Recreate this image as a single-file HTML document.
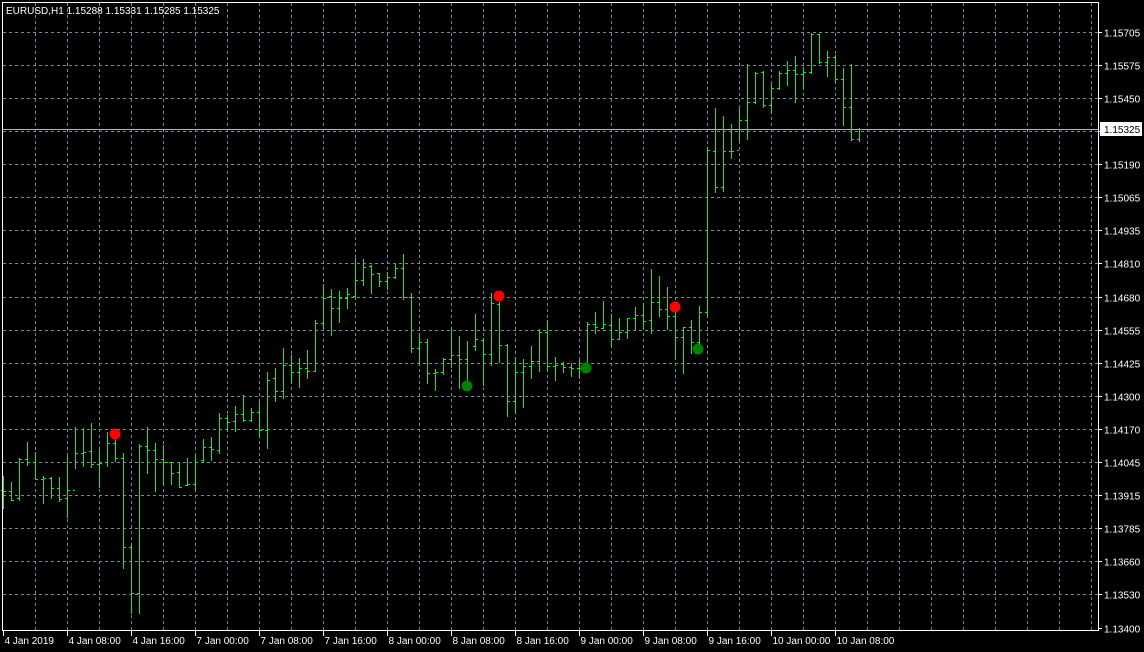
<!DOCTYPE html>
<html><head><meta charset="utf-8"><style>
html,body{margin:0;padding:0;background:#000;width:1144px;height:652px;overflow:hidden}
svg{display:block}
text{font-family:"Liberation Sans",sans-serif;font-size:10px;fill:#fff}
</style></head><body>
<svg id="c" width="1144" height="652" xmlns="http://www.w3.org/2000/svg">
<rect width="1144" height="652" fill="#000"/>
<g id="grid" stroke="#778899" stroke-width="1" stroke-dasharray="3,3"></g>
<line x1="2" y1="129.5" x2="1098" y2="129.5" stroke="#a8b4c0" stroke-width="1"/>
<g id="bars" stroke="#1ee61e" stroke-width="1" shape-rendering="crispEdges"></g>
<circle cx="115" cy="434" r="5.5" fill="#ff0000"/>
<circle cx="499" cy="296" r="5.5" fill="#ff0000"/>
<circle cx="675" cy="307" r="5.5" fill="#ff0000"/>
<circle cx="467" cy="386" r="5.5" fill="#008000"/>
<circle cx="586" cy="368" r="5.5" fill="#008000"/>
<circle cx="698" cy="349" r="5.5" fill="#008000"/>
<rect x="2.5" y="2.5" width="1096" height="628" fill="none" stroke="#fff" stroke-width="1"/>
<g id="axis"></g>
<text x="6" y="14">EURUSD,H1  1.15288 1.15331 1.15285 1.15325</text>
<rect x="1100" y="122" width="42" height="14" fill="#fff"/>
<text x="1104" y="133" style="fill:#000">1.15325</text>
</svg>
<script>
var NS="http://www.w3.org/2000/svg";
function el(p,t,a,txt){var e=document.createElementNS(NS,t);for(var k in a)e.setAttribute(k,a[k]);if(txt)e.textContent=txt;p.appendChild(e);return e;}
var g=document.getElementById('grid'),b=document.getElementById('bars'),ax=document.getElementById('axis');
var prices=["1.15705","1.15575","1.15450","1.15325","1.15190","1.15065","1.14935","1.14810","1.14680","1.14555","1.14425","1.14300","1.14170","1.14045","1.13915","1.13785","1.13660","1.13530","1.13400"];
for(var i=0;i<prices.length;i++){var y=Math.round(31.7+i*33.1)+0.5;
 if(i<18)el(g,'line',{x1:3,y1:y,x2:1098,y2:y});
 el(ax,'line',{x1:1098,y1:y,x2:1102,y2:y,stroke:'#fff'});
 if(i!=3)el(ax,'text',{x:1104,y:y+4},prices[i]);}
for(var j=1;j<=34;j++){var x=3+32*j+0.5;el(g,'line',{x1:x,y1:3,x2:x,y2:630});}
var times=["4 Jan 2019","4 Jan 08:00","4 Jan 16:00","7 Jan 00:00","7 Jan 08:00","7 Jan 16:00","8 Jan 00:00","8 Jan 08:00","8 Jan 16:00","9 Jan 00:00","9 Jan 08:00","9 Jan 16:00","10 Jan 00:00","10 Jan 08:00"];
for(var t=0;t<times.length;t++){var x=3+64*t+0.5;el(ax,'line',{x1:x,y1:631,x2:x,y2:636,stroke:'#fff'});el(ax,'text',{x:x+1,y:644},times[t]);}
var d=[[476,508,490,491],[482,500,491,500],[458,500,498,459],[442,465,459,462],[452,479,462,479],[476,503,479,478],[477,498,478,488],[477,501,488,499],[456,517,498,490],[427,468,490,453],[428,466,453,452],[423,467,451,464],[450,487,464,463],[432,466,462,443],[438,461,443,458],[453,568,458,547],[543,613,547,593],[444,613,593,446],[427,473,446,450],[443,491,450,459],[445,485,459,462],[462,484,462,473],[463,487,472,487],[458,485,485,484],[455,490,484,462],[439,462,460,447],[437,460,447,449],[413,453,450,418],[415,430,418,422],[406,431,421,414],[395,421,414,420],[408,421,420,412],[402,437,412,430],[372,448,430,380],[368,401,378,391],[348,398,391,365],[355,383,365,372],[358,387,372,368],[350,378,368,371],[320,371,371,323],[284,329,323,298],[289,335,296,308],[291,322,308,298],[288,308,298,294],[258,297,296,280],[259,285,280,267],[265,293,266,274],[273,286,273,281],[272,289,281,277],[264,278,277,268],[254,299,268,297],[293,352,297,348],[333,365,348,342],[339,383,342,373],[369,390,373,372],[358,374,372,359],[328,367,359,355],[336,388,355,359],[341,382,359,383],[314,350,346,339],[338,385,340,354],[293,365,354,303],[302,362,304,345],[344,416,345,401],[357,413,401,372],[359,407,372,366],[346,378,366,361],[329,371,361,332],[320,371,332,366],[357,380,366,365],[362,372,364,367],[363,376,367,368],[360,378,368,368],[322,367,368,324],[312,333,324,327],[301,328,328,324],[314,347,325,339],[318,339,339,332],[318,338,332,318],[307,329,318,315],[303,329,315,321],[269,333,320,302],[276,316,302,309],[287,329,309,316],[307,358,316,337],[327,373,337,327],[320,353,327,342],[306,349,342,312],[147,315,312,150],[108,192,151,187],[116,191,187,151],[124,158,151,151],[108,141,150,120],[64,139,120,102],[72,103,102,73],[71,107,72,105],[84,113,105,88],[71,89,88,73],[61,85,73,70],[56,102,70,74],[67,88,74,72],[33,73,72,34],[34,63,34,62],[51,76,62,57],[55,83,57,79],[68,125,79,107],[64,140,107,139],[128,141,139,129]];
for(var k=0;k<d.length;k++){var x=3+8*k,r=d[k];
 el(b,'line',{x1:x+0.5,y1:r[0],x2:x+0.5,y2:r[1]+1});
 el(b,'line',{x1:x-2,y1:r[2]+0.5,x2:x,y2:r[2]+0.5});
 el(b,'line',{x1:x+1,y1:r[3]+0.5,x2:x+3,y2:r[3]+0.5});}
</script>
</body></html>
